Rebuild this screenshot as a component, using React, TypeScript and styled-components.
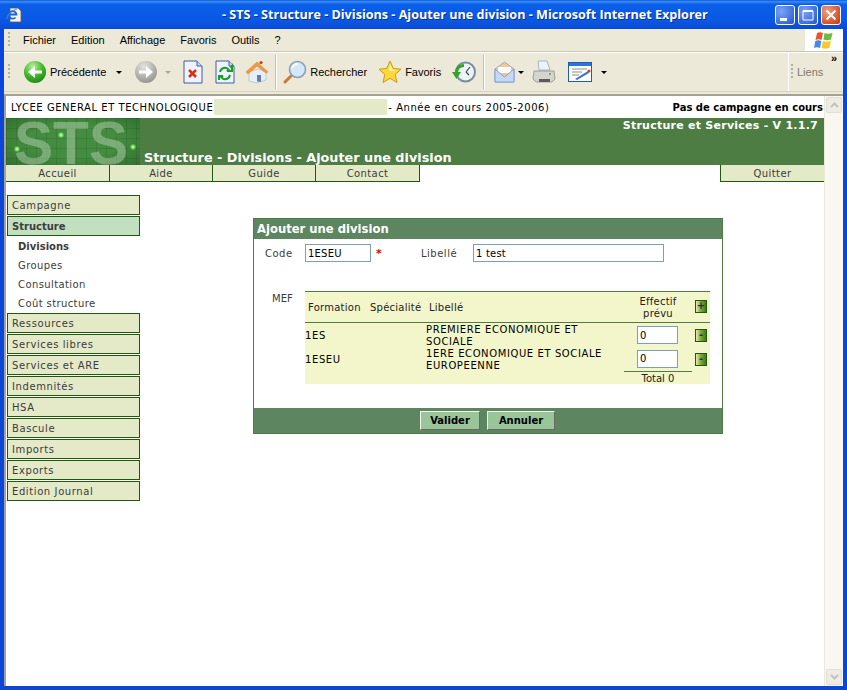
import React from 'react';
import styled, { createGlobalStyle } from 'styled-components';

const GlobalStyle = createGlobalStyle`
  html, body {
    margin: 0;
    padding: 0;
    background: #0a4be0;
    overflow: hidden;
  }
  * { box-sizing: border-box; }
`;

const Window = styled.div`
  width: 847px;
  height: 690px;
  display: flex;
  flex-direction: column;
  font-family: "DejaVu Sans", Verdana, sans-serif;
  background: #0a47d8;
`;

const TitleBar = styled.div`
  height: 29px;
  flex: none;
  display: flex;
  align-items: center;
  padding: 0 6px 0 6px;
  background: linear-gradient(180deg, #0a58e0 0%, #3c8cf4 6%, #0a5fe8 14%, #0a58e4 70%, #0a4ad6 100%);
`;

const TitleText = styled.div`
  margin-left: 200px;
  flex: 1;
  color: #fff;
  font-family: "Open Sans", sans-serif;
  font-size: 12.6px;
  font-weight: 700;
  white-space: nowrap;
  text-shadow: 1px 1px 0 #0a2f9c;
`;

const WinButtons = styled.div`
  display: flex;
  gap: 3px;
`;

const WinButton = styled.div<{ $close?: boolean }>`
  width: 20px;
  height: 20px;
  border: 1px solid #fff;
  border-radius: 3px;
  background: ${(p) =>
    p.$close
      ? 'radial-gradient(circle at 30% 30%, #f0a080, #d8512c 70%, #b8381c)'
      : 'radial-gradient(circle at 30% 30%, #7fa4f4, #3c6ce0 70%, #2a52c8)'};
  display: flex;
  align-items: center;
  justify-content: center;
`;

const Frame = styled.div`
  flex: 1;
  min-height: 0;
  margin: 0 4px 4px;
  display: flex;
  flex-direction: column;
  background: #ece9d8;
`;

const MenuBar = styled.div`
  height: 23px;
  flex: none;
  display: flex;
  align-items: center;
  border-bottom: 1px solid #c9c6b4;
  padding-left: 4px;
`;

const Grip = styled.div`
  width: 2px;
  height: 16px;
  flex: none;
  background: repeating-linear-gradient(180deg, #b4b1a0 0 2px, transparent 2px 4px);
`;

const MenuItems = styled.div`
  display: flex;
  gap: 15px;
  margin-left: 13px;
`;

const MenuItem = styled.span`
  font-family: "Liberation Sans", Arial, sans-serif;
  font-size: 11px;
  color: #000;
`;

const FlagBox = styled.div`
  margin-left: auto;
  width: 38px;
  height: 22px;
  background: #fff;
  display: flex;
  align-items: center;
  justify-content: center;
`;

const ToolBar = styled.div`
  height: 40px;
  flex: none;
  display: flex;
  align-items: center;
  padding-left: 4px;
  border-top: 1px solid #fff;
  border-bottom: 1px solid #d8d4c0;
`;

const Tool = styled.div<{ $ml?: number }>`
  display: flex;
  align-items: center;
  flex: none;
  margin-left: ${(p) => p.$ml ?? 0}px;
`;

const ToolLabel = styled.span<{ $muted?: boolean }>`
  font-family: "Liberation Sans", Arial, sans-serif;
  font-size: 11px;
  color: ${(p) => (p.$muted ? '#7a7a6c' : '#000')};
  margin-left: ${(p) => (p.$muted ? 4 : 3)}px;
  white-space: nowrap;
`;

const Caret = styled.span<{ $muted?: boolean }>`
  width: 0;
  height: 0;
  border-left: 3px solid transparent;
  border-right: 3px solid transparent;
  border-top: 3px solid ${(p) => (p.$muted ? '#a8a698' : '#000')};
`;

const ToolSep = styled.div<{ $ml: number }>`
  width: 1px;
  height: 34px;
  flex: none;
  margin-left: ${(p) => p.$ml}px;
  background: #c4c1ae;
  box-shadow: 1px 0 0 #fff;
`;

const LinksGroup = styled.div`
  margin-left: auto;
  width: 55px;
  height: 100%;
  display: flex;
  align-items: center;
  position: relative;
  border-left: 1px solid #fff;
  padding-left: 2px;
`;

const Chevrons = styled.span`
  position: absolute;
  top: 0;
  right: 6px;
  font-family: "Liberation Sans", Arial, sans-serif;
  font-size: 11px;
  font-weight: 700;
  line-height: 11px;
`;

const Viewport = styled.div`
  flex: 1;
  min-height: 0;
  display: flex;
  margin-top: 2px;
  border-top: 2px solid #a5a294;
  border-left: 2px solid #a5a294;
  background: #fff;
`;

const Page = styled.div`
  flex: 1;
  min-width: 0;
  background: #fff;
  border-right: 1px solid #ece9d8;
`;

const Scrollbar = styled.div`
  width: 18px;
  flex: none;
  display: flex;
  flex-direction: column;
  justify-content: space-between;
  background: #f8f8f0;
  padding: 1px;
`;

const ScrollButton = styled.div`
  height: 16px;
  background: #eeede5;
  border: 1px solid #e2e0d6;
  border-radius: 2px;
  display: flex;
  align-items: center;
  justify-content: center;
`;

const InfoRow = styled.div`
  height: 22px;
  display: flex;
  align-items: center;
  padding: 0 1px 0 5px;
  font-size: 10px;
  letter-spacing: 0.55px;
  color: #000;
`;

const Etab = styled.div`
  width: 173px;
  height: 16px;
  margin: 0 1px;
  background: #e4e9c8;
`;

const CampaignNote = styled.b`
  margin-left: auto;
  letter-spacing: 0;
`;

const Banner = styled.div`
  height: 47px;
  display: flex;
  background: #4e7d43;
`;

const LogoSvg = styled.svg`
  display: block;
  flex: none;
`;

const BannerText = styled.div`
  flex: 1;
  display: flex;
  flex-direction: column;
  justify-content: space-between;
  color: #fff;
  font-weight: 700;
  padding: 1px 6px 0 4px;
`;

const Version = styled.div`
  align-self: flex-end;
  font-size: 11px;
  letter-spacing: 0.25px;
`;

const PageTitle = styled.div`
  font-size: 12.8px;
  line-height: 15px;
`;

const Tabs = styled.div`
  height: 17px;
  display: flex;
`;

const Tab = styled.div<{ $w?: number; $push?: boolean }>`
  width: ${(p) => p.$w ?? 103}px;
  background: #e4e9c8;
  border-bottom: 1px solid #1e5a0c;
  border-right: 1px solid #1e5a0c;
  color: #3c3c3c;
  font-size: 10px;
  letter-spacing: 0.4px;
  display: flex;
  align-items: center;
  justify-content: center;
  ${(p) => p.$push && 'margin-left: auto; border-right: none; border-left: 1px solid #1e5a0c;'}
`;

const Content = styled.div`
  display: flex;
  align-items: flex-start;
`;

const Sidebar = styled.nav`
  width: 133px;
  flex: none;
  margin: 13px 0 0 1px;
  display: flex;
  flex-direction: column;
  gap: 1px;
`;

const SideItem = styled.div<{ $active?: boolean }>`
  height: 20px;
  padding-left: 4px;
  display: flex;
  align-items: center;
  border: 1px solid #1e5a0c;
  background: ${(p) => (p.$active ? '#c2dfc0' : '#e4e9c8')};
  color: #3c3c3c;
  font-size: 10px;
  font-weight: ${(p) => (p.$active ? 700 : 400)};
  letter-spacing: ${(p) => (p.$active ? 0 : 0.6)}px;
`;

const SubMenu = styled.div`
  display: flex;
  flex-direction: column;
  margin-bottom: -1px;
`;

const SubItem = styled.div<{ $active?: boolean }>`
  height: 19px;
  padding-left: 11px;
  display: flex;
  align-items: center;
  color: #3c3c3c;
  font-size: 10px;
  font-weight: ${(p) => (p.$active ? 700 : 400)};
  letter-spacing: ${(p) => (p.$active ? 0 : 0.4)}px;
`;

const Dialog = styled.section`
  width: 470px;
  height: 216px;
  margin: 36px 0 0 113px;
  flex: none;
  display: flex;
  flex-direction: column;
  border: 1px solid #4e7d43;
`;

const DialogHeader = styled.h2`
  margin: 0;
  height: 20px;
  flex: none;
  padding-left: 3px;
  display: flex;
  align-items: center;
  background: #5c8560;
  color: #fff;
  font-size: 11.6px;
  font-weight: 700;
`;

const DialogBody = styled.div`
  flex: 1;
  padding: 5px 0 0 11px;
`;

const FormRow = styled.div`
  display: flex;
  align-items: center;
  height: 18px;
`;

const FieldLabel = styled.label<{ $w: number }>`
  width: ${(p) => p.$w}px;
  flex: none;
  color: #3c3c3c;
  font-size: 10px;
  letter-spacing: 0.5px;
`;

const TextField = styled.input<{ $w: number }>`
  width: ${(p) => p.$w}px;
  height: 18px;
  flex: none;
  padding: 0 2px;
  border: 1px solid #7f9db9;
  background: #fff;
  color: #000;
  font-family: "DejaVu Sans", Verdana, sans-serif;
  font-size: 10px;
  letter-spacing: 0.2px;
  outline: none;
`;

const Required = styled.span`
  width: 45px;
  flex: none;
  margin-left: 5px;
  color: #e00000;
  font-size: 11px;
  font-weight: 700;
`;

const MefRow = styled.div`
  display: flex;
  margin-top: 29px;
`;

const MefLabel = styled.div`
  width: 40px;
  flex: none;
  padding: 2px 0 0 7px;
  color: #3c3c3c;
  font-size: 10px;
`;

const MefTable = styled.table`
  width: 405px;
  height: 93px;
  table-layout: fixed;
  border-collapse: collapse;
  background: #f2f6ca;
  border-top: 1px solid #4e7d43;
  font-size: 10px;
  color: #000;

  td, th {
    padding: 0;
    font-weight: 400;
    text-align: left;
    vertical-align: middle;
  }
`;

const HeadRow = styled.tr`
  height: 31px;
  border-bottom: 1px solid #4e7d43;
  color: #222;
  font-size: 10px;
  letter-spacing: 0.25px;

  th:nth-child(1) { padding-left: 3px; }
  th:nth-child(3) { padding-left: 3px; }
  th:nth-child(4) { text-align: center; line-height: 12px; padding-top: 2px; }
`;

const BodyRow = styled.tr`
  height: 24px;
  line-height: 11.5px;
  letter-spacing: 0.6px;

  td:nth-child(-n+3) { padding-top: 1px; }
`;

const QtyField = styled(TextField)`
  display: block;
  margin-left: 13px;
`;

const TotalCell = styled.td`
  text-align: center !important;
  border-top: 1px solid #4e7d43;
  font-size: 10px;
  color: #222;
  padding-top: 1px !important;
`;

const TotalRow = styled.tr`
  height: 13px;
  line-height: 11px;
`;

const RowButton = styled.div<{ $head?: boolean }>`
  width: 12px;
  height: 13px;
  margin: ${(p) => (p.$head ? '-2px 0 0 3px' : '0 0 0 3px')};
  border: 1px solid #1e5a0c;
  background: linear-gradient(90deg, #e2ecb0 0%, #86aa3c 45%, #3e7a14 100%);
  color: #143c3c;
  font-size: 10px;
  line-height: 10px;
  font-weight: 700;
  letter-spacing: 0;
  text-align: center;
`;

const DialogFooter = styled.div`
  height: 25px;
  flex: none;
  display: flex;
  justify-content: center;
  align-items: center;
  gap: 7px;
  padding-right: 1px;
  background: #5c8560;
`;

const ActionButton = styled.button<{ $w: number }>`
  width: ${(p) => p.$w}px;
  height: 19px;
  padding: 0;
  border: 1px solid;
  border-color: #f4f4ec #6a6a64 #6a6a64 #f4f4ec;
  background: #9ac49a;
  color: #000;
  font-family: "DejaVu Sans", Verdana, sans-serif;
  font-size: 10px;
  font-weight: 700;
`;

const StsLogo = () => (
  <LogoSvg width="134" height="47" viewBox="0 0 134 47">
    <defs>
      <pattern id="logoGrid" width="10" height="10" patternUnits="userSpaceOnUse">
        <path d="M0 0h10M0 0v10" stroke="#1e501e" strokeOpacity=".4" fill="none" />
      </pattern>
      <radialGradient id="logoShade" cx="50%" cy="50%" r="70%">
        <stop offset=".5" stopColor="#143c14" stopOpacity="0" />
        <stop offset="1" stopColor="#143c14" stopOpacity=".35" />
      </radialGradient>
      <radialGradient id="logoDot">
        <stop offset=".3" stopColor="#a4f890" />
        <stop offset="1" stopColor="#5ce048" stopOpacity="0" />
      </radialGradient>
    </defs>
    <rect width="134" height="47" fill="#448c40" />
    <rect width="134" height="47" fill="url(#logoGrid)" />
    <rect width="134" height="47" fill="url(#logoShade)" />
    <text
      x="8"
      y="46"
      fontFamily="'Liberation Sans', Arial, sans-serif"
      fontSize="62"
      fontWeight="700"
      textLength="114"
      lengthAdjust="spacingAndGlyphs"
      fill="#bed7b9"
      fillOpacity=".45"
    >
      STS
    </text>
    <circle cx="55" cy="17" r="3.500" fill="url(#logoDot)" />
    <circle cx="11" cy="31" r="3.500" fill="url(#logoDot)" />
    <circle cx="127" cy="29" r="3.500" fill="url(#logoDot)" />
  </LogoSvg>
);

const NavIcon = ({ forward }: { forward?: boolean }) => (
  <svg width="24" height="24" viewBox="0 0 24 24">
    <defs>
      <radialGradient id={forward ? 'navF' : 'navB'} cx="40%" cy="25%" r="85%">
        <stop offset="0" stopColor={forward ? '#e4e4e0' : '#b8f0a0'} />
        <stop offset=".55" stopColor={forward ? '#b4b4ae' : '#3cb428'} />
        <stop offset="1" stopColor={forward ? '#8c8c86' : '#1a7c14'} />
      </radialGradient>
    </defs>
    <circle cx="12" cy="12" r="11" fill={`url(#${forward ? 'navF' : 'navB'})`} />
    <path
      d={forward ? 'M5 10.5h7V6l7 6-7 6v-4.5H5z' : 'M19 10.5h-7V6l-7 6 7 6v-4.5h7z'}
      fill="#fff"
    />
  </svg>
);

const DocIcon = ({ children }: { children: React.ReactNode }) => (
  <svg width="20" height="24" viewBox="0 0 20 24">
    <path d="M1 1h13l5 5v17H1z" fill="#eef3fc" stroke="#3c5ca8" />
    <path d="M14 1v5h5" fill="#c8d8f4" stroke="#3c5ca8" />
    {children}
  </svg>
);

const HomeIcon = () => (
  <svg width="24" height="24" viewBox="0 0 24 24">
    <path d="M4 12v9l8 2 9-3v-8l-8-3z" fill="#e8eef8" stroke="#94a4c0" strokeWidth=".5" />
    <path d="M12 15h4v7l-4-.6z" fill="#6480b0" />
    <path d="M1 12 12 2l11 10-2 1-9-7-9 8z" fill="#f49a3c" stroke="#d87820" strokeWidth=".5" />
    <circle cx="16" cy="2.500" r="1.600" fill="#c83c20" />
  </svg>
);

const SearchIcon = () => (
  <svg width="24" height="24" viewBox="0 0 24 24">
    <path d="M2 22l7-7" stroke="#c87c30" strokeWidth="3" strokeLinecap="round" />
    <circle cx="14.500" cy="9.500" r="8" fill="#d4e8fc" stroke="#8ca0bc" strokeWidth="1.600" />
    <path d="M9 8c1-3 3-4 6-4" stroke="#fff" strokeWidth="2" fill="none" />
  </svg>
);

const StarIcon = () => (
  <svg width="24" height="24" viewBox="0 0 24 24">
    <path
      d="M12 1l3.300 7.400 7.700.8-5.800 5.300 1.800 8L12 18.300 5 22.500l1.800-8L1 9.200l7.700-.8z"
      fill="#fcd83c"
      stroke="#c89c14"
      strokeLinejoin="round"
    />
    <path d="M12 4l2 5.500 5 .5-8 1z" fill="#fff6b8" />
  </svg>
);

const HistoryIcon = () => (
  <svg width="24" height="24" viewBox="0 0 24 24">
    <circle cx="13.500" cy="12" r="9.500" fill="#eef3f8" stroke="#7c8ca0" strokeWidth="2" />
    <path d="M14 12l4-5M14 12l3 3" stroke="#3c4450" strokeWidth="1.200" />
    <path d="M12 5.500C7 5.500 4.500 9 4.500 13" fill="none" stroke="#2fa624" strokeWidth="3" />
    <path d="M0 12h9l-4.500 7z" fill="#2fa624" />
  </svg>
);

const MailIcon = () => (
  <svg width="21" height="24" viewBox="0 0 21 24">
    <path d="M1 9 10.500 2 20 9v13H1z" fill="#f4c98c" stroke="#8c9cd0" strokeWidth=".8" />
    <path d="M4 7h13v6H4z" fill="#fff" />
    <path d="M1 9l9.500 8L20 9v13H1z" fill="#c4d8f8" stroke="#7c90d0" strokeWidth=".8" />
  </svg>
);

const PrintIcon = () => (
  <svg width="24" height="24" viewBox="0 0 24 24">
    <path d="M6 1h9l3 9H7z" fill="#eef2fa" stroke="#8c9cb4" strokeWidth=".7" />
    <path d="M2 11h20l1 8-3 3H4l-3-3z" fill="#d4d4d0" stroke="#84847c" strokeWidth=".7" />
    <path d="M7 19h11v3H7z" fill="#5c5c58" />
    <circle cx="18" cy="14" r="1" fill="#5c9c3c" />
  </svg>
);

const EditIcon = () => (
  <svg width="24" height="20" viewBox="0 0 24 20">
    <rect x=".5" y=".5" width="23" height="19" fill="#fff" stroke="#1c5cc0" />
    <rect x="1" y="1" width="22" height="3" fill="#2c74d8" />
    <path d="M4 7h15M4 10h10M4 13h7" stroke="#8c8c8c" />
    <path d="M7 17l13-8 1 2-12 7z" fill="#3c74d0" />
    <circle cx="21" cy="9" r="1.500" fill="#d83c20" />
  </svg>
);

const IeIcon = () => (
  <svg width="16" height="17" viewBox="0 0 16 17">
    <path d="M4 2h8l3 3v11H4z" fill="#f4f4ec" stroke="#5c5c5c" strokeWidth=".8" />
    <path d="M3 8.500h7.500a3.800 3.800 0 1 0-1 3" fill="none" stroke="#1c64d0" strokeWidth="1.800" />
    <path d="M1 13C0 10 6 4 11 3" fill="none" stroke="#3c8ce8" strokeWidth="1" />
  </svg>
);

const WinFlag = () => (
  <svg width="20" height="19" viewBox="0 0 20 19">
    <path d="M3 2c2-1 4-1 6 0L7.500 9c-2-1-4-1-6 0z" fill="#e8542c" />
    <path d="M10.500 2c2 1 5 1 8 0L17 8.500c-3 1-5 1-7.500 0z" fill="#6cbc3c" />
    <path d="M1.300 10c2-1 4-1 6 0L6 17c-2-1-4-1-6 0z" fill="#3c8ce8" />
    <path d="M9 10c2.500 1 5 1 7.800 0L15.500 17c-3 1-5 1-8 0z" fill="#f8c82c" />
  </svg>
);

const Chevron = ({ up }: { up?: boolean }) => (
  <svg width="9" height="6" viewBox="0 0 9 6">
    <path d={up ? 'M1 5l3.500-3.500L8 5' : 'M1 1l3.500 3.500L8 1'} fill="none" stroke="#c4c2b8" strokeWidth="2" />
  </svg>
);

const menuItems = ['Fichier', 'Edition', 'Affichage', 'Favoris', 'Outils', '?'];
const tabs = [
  { label: 'Accueil', width: 104 },
  { label: 'Aide', width: 103 },
  { label: 'Guide', width: 103 },
  { label: 'Contact', width: 104 },
];
const afterStructure = [
  'Ressources',
  'Services libres',
  'Services et ARE',
  'Indemnités',
  'HSA',
  'Bascule',
  'Imports',
  'Exports',
  'Edition Journal',
];

const App: React.FC = () => {
  return (
    <Window>
      <GlobalStyle />
      <TitleBar>
        <IeIcon />
        <TitleText>- STS - Structure - Divisions - Ajouter une division - Microsoft Internet Explorer</TitleText>
        <WinButtons>
          <WinButton>
            <svg width="14" height="14" viewBox="0 0 14 14"><rect x="2" y="10" width="7" height="3" fill="#fff" /></svg>
          </WinButton>
          <WinButton>
            <svg width="14" height="14" viewBox="0 0 14 14"><path d="M2 3h10v9H2z" fill="none" stroke="#fff" /><rect x="2" y="2" width="10" height="2" fill="#fff" /></svg>
          </WinButton>
          <WinButton $close>
            <svg width="14" height="14" viewBox="0 0 14 14"><path d="M2.500 2.500l9 9M11.500 2.500l-9 9" stroke="#fff" strokeWidth="2" /></svg>
          </WinButton>
        </WinButtons>
      </TitleBar>
      <Frame>
        <MenuBar>
          <Grip />
          <MenuItems>
            {menuItems.map((item) => (
              <MenuItem key={item}>{item}</MenuItem>
            ))}
          </MenuItems>
          <FlagBox>
            <WinFlag />
          </FlagBox>
        </MenuBar>
        <ToolBar>
          <Grip />
          <Tool $ml={13}>
            <NavIcon />
            <ToolLabel>Précédente</ToolLabel>
          </Tool>
          <Tool $ml={10}><Caret /></Tool>
          <Tool $ml={12}><NavIcon forward /></Tool>
          <Tool $ml={7}><Caret $muted /></Tool>
          <Tool $ml={12}>
            <DocIcon>
              <path d="M6 10l7 7M13 10l-7 7" stroke="#e02c10" strokeWidth="2.500" />
            </DocIcon>
          </Tool>
          <Tool $ml={12}>
            <DocIcon>
              <path d="M5 12a5 5 0 0 1 9-2l-2 1h5V6l-1.500 2M15 15a5 5 0 0 1-9 2l2-1H4v4" fill="none" stroke="#1c9c28" strokeWidth="2" />
            </DocIcon>
          </Tool>
          <Tool $ml={10}><HomeIcon /></Tool>
          <ToolSep $ml={6} />
          <Tool $ml={7}>
            <SearchIcon />
            <ToolLabel>Rechercher</ToolLabel>
          </Tool>
          <Tool $ml={11}>
            <StarIcon />
            <ToolLabel>Favoris</ToolLabel>
          </Tool>
          <Tool $ml={11}><HistoryIcon /></Tool>
          <ToolSep $ml={7} />
          <Tool $ml={10}><MailIcon /></Tool>
          <Tool $ml={3}><Caret /></Tool>
          <Tool $ml={8}><PrintIcon /></Tool>
          <Tool $ml={12}><EditIcon /></Tool>
          <Tool $ml={9}><Caret /></Tool>
          <LinksGroup>
            <Grip />
            <ToolLabel $muted>Liens</ToolLabel>
            <Chevrons>»</Chevrons>
          </LinksGroup>
        </ToolBar>
        <Viewport>
          <Page>
            <InfoRow>
              LYCEE GENERAL ET TECHNOLOGIQUE
              <Etab />
              - Année en cours 2005-2006)
              <CampaignNote>Pas de campagne en cours</CampaignNote>
            </InfoRow>
            <Banner>
              <StsLogo />
              <BannerText>
                <Version>Structure et Services - V 1.1.7</Version>
                <PageTitle>Structure - Divisions - Ajouter une division</PageTitle>
              </BannerText>
            </Banner>
            <Tabs>
              {tabs.map((tab) => (
                <Tab key={tab.label} $w={tab.width}>{tab.label}</Tab>
              ))}
              <Tab $push $w={104}>Quitter</Tab>
            </Tabs>
            <Content>
              <Sidebar>
                <SideItem>Campagne</SideItem>
                <SideItem $active>Structure</SideItem>
                <SubMenu>
                  <SubItem $active>Divisions</SubItem>
                  <SubItem>Groupes</SubItem>
                  <SubItem>Consultation</SubItem>
                  <SubItem>Coût structure</SubItem>
                </SubMenu>
                {afterStructure.map((item) => (
                  <SideItem key={item}>{item}</SideItem>
                ))}
              </Sidebar>
              <Dialog>
                <DialogHeader>Ajouter une division</DialogHeader>
                <DialogBody>
                  <FormRow>
                    <FieldLabel $w={40}>Code</FieldLabel>
                    <TextField $w={66} defaultValue="1ESEU" />
                    <Required>*</Required>
                    <FieldLabel $w={52}>Libellé</FieldLabel>
                    <TextField $w={191} defaultValue="1 test" />
                  </FormRow>
                  <MefRow>
                    <MefLabel>MEF</MefLabel>
                    <MefTable>
                      <colgroup>
                        <col style={{ width: 65 }} />
                        <col style={{ width: 56 }} />
                        <col style={{ width: 198 }} />
                        <col style={{ width: 68 }} />
                        <col style={{ width: 18 }} />
                      </colgroup>
                      <thead>
                        <HeadRow>
                          <th>Formation</th>
                          <th>Spécialité</th>
                          <th>Libellé</th>
                          <th>Effectif<br />prévu</th>
                          <th><RowButton $head>+</RowButton></th>
                        </HeadRow>
                      </thead>
                      <tbody>
                        <BodyRow>
                          <td>1ES</td>
                          <td />
                          <td>PREMIERE ECONOMIQUE ET<br />SOCIALE</td>
                          <td><QtyField $w={41} defaultValue="0" /></td>
                          <td><RowButton>-</RowButton></td>
                        </BodyRow>
                        <BodyRow>
                          <td>1ESEU</td>
                          <td />
                          <td>1ERE ECONOMIQUE ET SOCIALE<br />EUROPEENNE</td>
                          <td><QtyField $w={41} defaultValue="0" /></td>
                          <td><RowButton>-</RowButton></td>
                        </BodyRow>
                        <TotalRow>
                          <td colSpan={3} />
                          <TotalCell>Total 0</TotalCell>
                          <td />
                        </TotalRow>
                      </tbody>
                    </MefTable>
                  </MefRow>
                </DialogBody>
                <DialogFooter>
                  <ActionButton $w={60}>Valider</ActionButton>
                  <ActionButton $w={68}>Annuler</ActionButton>
                </DialogFooter>
              </Dialog>
            </Content>
          </Page>
          <Scrollbar>
            <ScrollButton><Chevron up /></ScrollButton>
            <ScrollButton><Chevron /></ScrollButton>
          </Scrollbar>
        </Viewport>
      </Frame>
    </Window>
  );
};

export default App;
